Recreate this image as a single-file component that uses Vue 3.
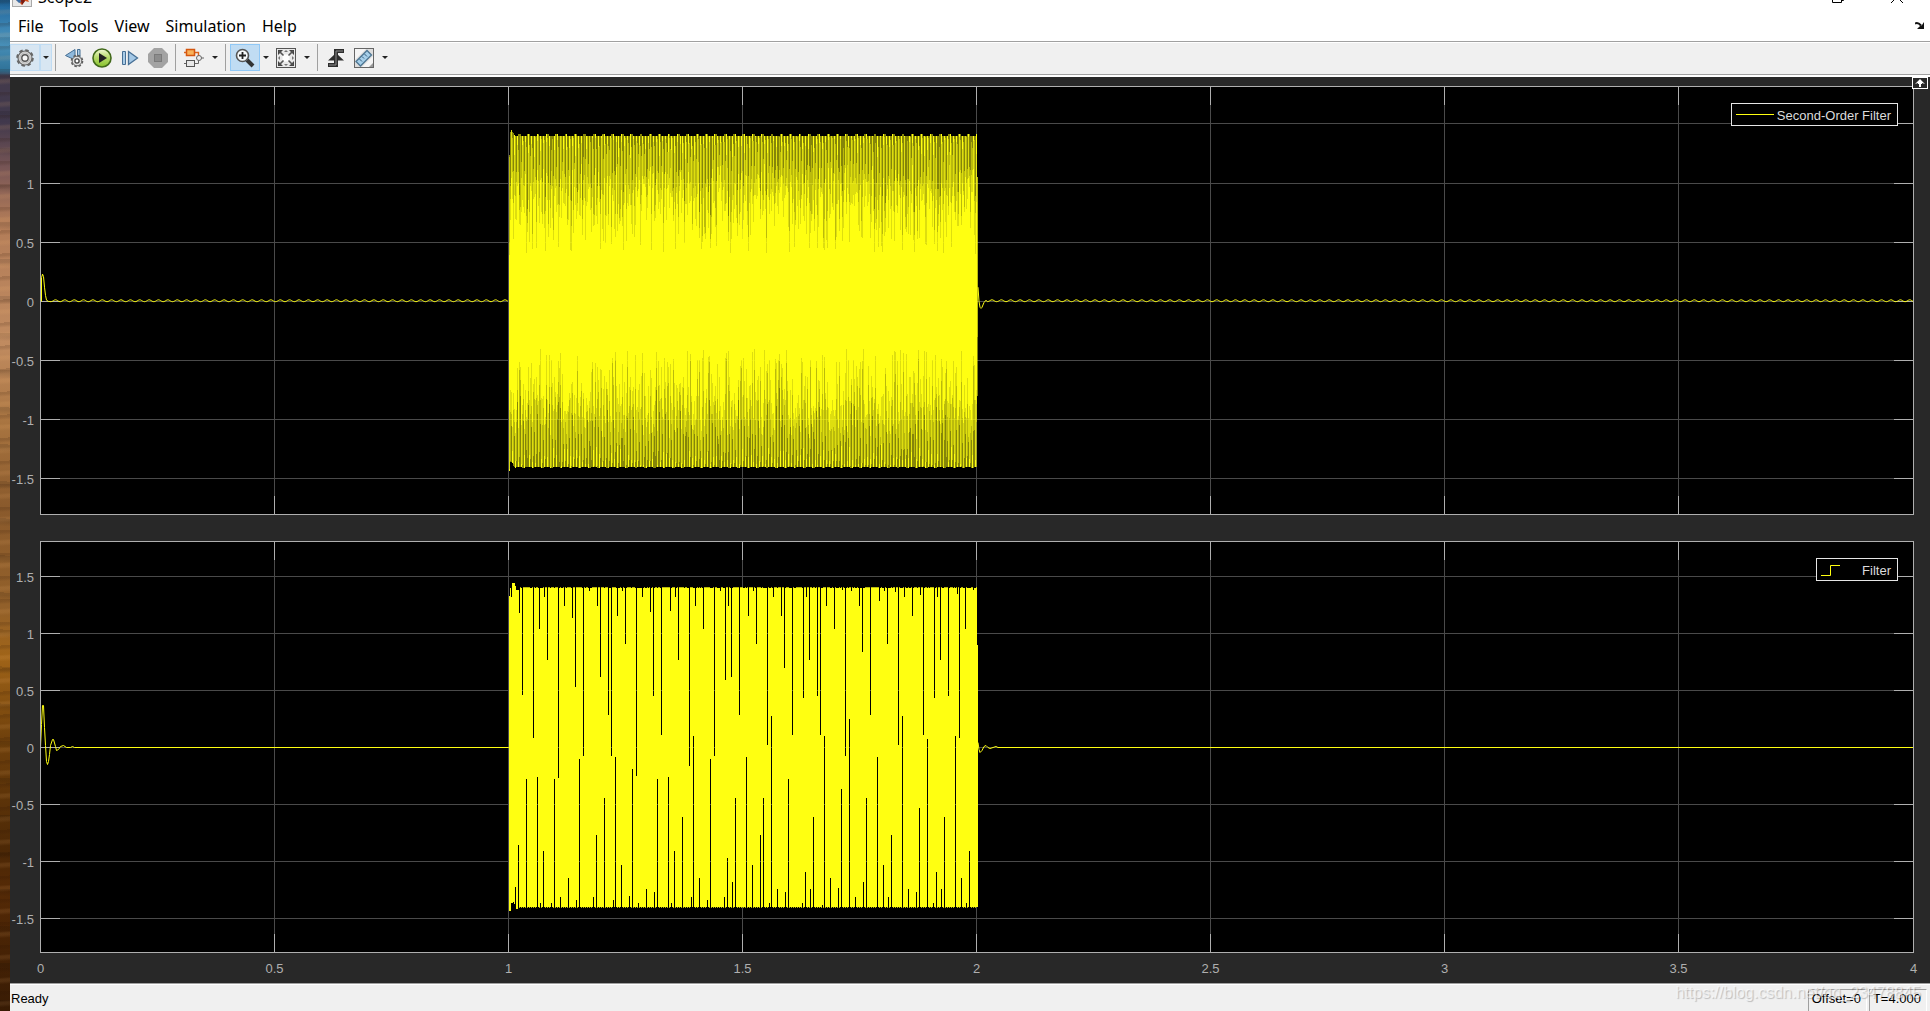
<script setup>
import { ref, reactive, computed, onMounted, onBeforeUnmount } from 'vue'

const menus = ['File', 'Tools', 'View', 'Simulation', 'Help']
const xTicks = [0, 0.5, 1, 1.5, 2, 2.5, 3, 3.5, 4]
const yTicks = [1.5, 1, 0.5, 0, -0.5, -1, -1.5]

const PLOT_LEFT = 30
const PLOT_RIGHT = 17
const TICK = 19

// Raster on which the burst is drawn: columns per second of simulated time
const RATE = 468

const frac = (n) => n - Math.floor(n)
const noise = (i, k) => frac(Math.sin(i * 12.9898 + k * 78.233) * 43758.5453)

// Each shade holds [column, from, to] entries
function sineBurst() {
  const shades = { full: [], light: [], mid: [], dark: [] }
  for (const side of [1, -1]) {
    for (let i = 1; i <= 468; i++) {
      let peak = 1.4 + (frac((i + (side < 0 ? 5 : 0)) / 9.36) < 0.3 ? 0.012 : 0)
      if (side > 0 && i < 7) peak = [1.24, 1.43, 1.45, 1.43, 1.42, 1.41][i - 1]
      if (side < 0 && i < 7) peak = [1.43, 1.36, 1.36, 1.37, 1.39, 1.4][i - 1]
      const phase = frac(i * 0.3437 + side * 0.2)
      const bright = phase < 0.32
      const a = peak - (0.4 + 0.6 * noise(i, side)) * (bright ? 0.6 : 1)
      const b = peak - (peak - a) * (bright ? 0.35 * noise(i, side + 3) : 0.55 + 0.4 * noise(i, side + 3))
      const c = peak - (peak - b) * (phase > 0.62 ? 0.35 + 0.5 * noise(i, side + 6) : 0.2 * noise(i, side + 6))
      shades.full.push([i, 0, a * side])
      shades.light.push([i, a * side, b * side])
      if (bright) {
        shades.full.push([i, b * side, peak * side])
      } else {
        shades.mid.push([i, b * side, c * side])
        shades.dark.push([i, c * side, peak * side])
      }
    }
  }
  shades.dark.push([469, -0.8, -0.3])
  shades.mid.push([469, -0.3, 1.05])
  return shades
}

// Gaps in the sampled signal as [position, level], in fine units:
// 3 positions per column, 341 levels per unit of amplitude around level 562
const upperGaps = [
  [0, [[34, 110], [58, 158], [67, 404], [100, 534], [118, 207], [133, 110], [142, 299], [175, 654], [193, 138], [217, 174],
    [226, 381], [250, 588], [268, 93], [292, 138], [301, 351], [325, 465], [334, 588], [352, 168], [367, 93], [376, 252],
    [409, 648], [427, 110], [451, 156], [460, 408], [484, 525], [511, 153], [526, 110], [535, 299], [568, 618], [586, 138],
    [610, 207], [643, 588], [661, 93], [676, 360], [685, 138], [694, 351], [718, 465], [745, 168], [760, 93], [769, 252]]],
  [750, [[52, 555], [70, 110], [94, 168], [103, 324], [127, 525], [160, 414], [169, 110], [178, 299], [202, 408], [211, 525],
    [229, 138], [253, 207], [277, 90], [286, 588], [304, 93], [328, 138], [337, 276], [361, 465], [388, 123], [403, 93],
    [412, 252], [436, 96], [445, 555], [463, 110], [487, 168], [511, 105], [520, 525], [553, 414], [562, 110], [571, 299],
    [595, 408], [622, 102], [628, 534], [646, 207], [670, 90]]],
]
const lowerGaps = [
  [0, [[46, 981], [55, 855], [79, 657], [112, 651], [121, 1029], [130, 873], [154, 1029], [163, 657], [181, 1011], [205, 954],
    [229, 1020], [238, 597], [280, 1011], [289, 825], [313, 714], [340, 1020], [346, 591], [364, 915], [388, 1008], [397, 627],
    [415, 1029], [439, 987], [463, 996], [472, 657], [505, 651], [514, 1029], [523, 873], [547, 771], [574, 1011], [580, 528],
    [598, 954], [622, 1020], [631, 597], [673, 1011], [682, 894], [697, 966], [706, 714], [739, 591], [757, 915]]],
  [750, [[31, 825], [40, 714], [58, 1029], [64, 468], [82, 987], [106, 996], [115, 657], [157, 1029], [166, 936], [181, 987],
    [190, 771], [217, 1035], [223, 528], [241, 954], [265, 984], [274, 687], [298, 477], [316, 1011], [340, 966], [349, 714],
    [382, 591], [400, 915], [415, 1011], [424, 825], [457, 468], [475, 987], [499, 996], [508, 744], [532, 537], [550, 1029],
    [559, 936], [574, 987], [583, 771], [616, 528], [634, 954], [649, 1029], [658, 873]]],
]

function gapMap(groups) {
  const map = new Map()
  for (const [start, list] of groups) {
    for (const [pos, level] of list) map.set((start + pos - 25) / 3, (562 - level) / 341)
  }
  return map
}

function sampledBurst() {
  const upper = gapMap(upperGaps)
  const lower = gapMap(lowerGaps)
  const full = []
  const mid = []
  const startTop = [1.33, 1.4, 1.33, 1.45, 1.45, 1.45, 1.42, 1.39, 1.39, 1.39]
  const startBottom = [-1.44, -1.44, -1.37, -1.37, -1.36, -1.38, -1.41, -1.42, -1.42, -1.41]
  for (let i = 1; i <= 468; i++) {
    const top = upper.get(i) ?? startTop[i - 1] ?? 1.405
    const bottom = lower.get(i) ?? startBottom[i - 1] ?? -1.405
    full.push([i, bottom, top])
    if (i > 10 && !upper.has(i) && noise(i, 2) > 0.4) mid.push([i, top, top + 0.01])
    if (i > 10 && !lower.has(i) && i % 2) mid.push([i, bottom - 0.01, bottom])
  }
  full.push([469, -1.4, 0.9])
  return { full, light: [], mid, dark: [] }
}

function ripple(from, to) {
  const points = []
  for (let t = from; t <= to; t += 0.002) points.push([t, 0.005 + 0.008 * Math.sin((t - 0.007) * 2 * Math.PI * 50)])
  return points
}
const at = (start, list) => list.map(([dx, v]) => [start + dx / RATE, v])

const charts = reactive([
  {
    name: 'Second-Order Filter',
    marker: 'line',
    top: 9,
    bottom: 12,
    max: 1.8162,
    min: -1.8018,
    width: 1920,
    height: 450,
    showX: false,
    shades: sineBurst(),
    lines: [
      [...at(0, [[1, 0], [1, 0.2], [2, 0.23], [3, 0.21], [4, 0.12], [5, 0.05], [6, 0.01], [8, 0]]), ...ripple(0.02, 1)],
      [...at(2, [[1, 0.12], [2, 0], [3, -0.05], [4, -0.06], [5, -0.05], [7, -0.01], [9, 0.01]]), ...ripple(2.022, 4)],
    ],
  },
  {
    name: 'Filter',
    marker: 'step',
    top: 14,
    bottom: 30,
    max: 1.8123,
    min: -1.8035,
    width: 1920,
    height: 456,
    showX: true,
    shades: sampledBurst(),
    lines: [
      [...at(0, [[0, 0], [1, 0.2], [2, 0.37], [3, 0.37], [4, 0.18], [5, 0.02], [6, -0.12], [7, -0.15], [8, -0.12], [9, -0.06],
        [10, 0.02], [12, 0.07], [13, 0.07], [15, 0.01], [16, -0.03], [18, -0.02], [20, 0.01], [23, 0.015], [26, 0], [30, 0], [32, 0.01], [34, 0]]), [1, 0]],
      [...at(2, [[1, 0.04], [2, -0.02], [3, -0.04], [5, -0.03], [7, 0.01], [9, 0.02], [11, 0], [13, -0.01], [16, 0], [19, 0.01], [21, 0]]), [4, 0]],
    ],
  },
])

const xAt = (c, t) => PLOT_LEFT + 0.5 + (t / 4) * (c.width - PLOT_LEFT - PLOT_RIGHT)
const plotBottom = (c) => c.height - c.bottom - 1
const yAt = (c, v) => c.top + 0.5 + ((c.max - v) / (c.max - c.min)) * (plotBottom(c) - c.top)
const snapX = (c, t) => Math.floor(xAt(c, t) - 0.5) + 0.5
const snapY = (c, v) => Math.round(yAt(c, v) - 0.5) + 0.5
const columnWidth = (c) => (c.width - PLOT_LEFT - PLOT_RIGHT) / 1873

const columns = (c, list) => {
  const start = Math.floor(xAt(c, 1)) + 0.5
  const step = columnWidth(c)
  return list
    .map(([i, from, to]) => `M${start + i * step} ${Math.round(yAt(c, from))}V${Math.round(yAt(c, to))}`)
    .join('')
}
const polyline = (c, points) => {
  const y = c.marker === 'step' ? snapY : yAt
  return points.map(([t, v]) => `${xAt(c, t).toFixed(1)},${y(c, v).toFixed(1)}`).join(' ')
}

const drawn = computed(() =>
  charts.map((c) => ({
    shades: Object.entries(c.shades).map(([shade, list]) => ({ shade, d: columns(c, list) })),
    lines: c.lines.map((points) => polyline(c, points)),
  })),
)

const panels = ref([])
let observer
function measure() {
  panels.value.forEach((el, i) => {
    charts[i].width = el.clientWidth
    charts[i].height = el.clientHeight
  })
}
onMounted(() => {
  measure()
  observer = new ResizeObserver(measure)
  panels.value.forEach((el) => observer.observe(el))
})
onBeforeUnmount(() => observer?.disconnect())
</script>

<template>
  <div class="desktop">
    <div class="wallpaper"></div>
    <main class="window">
      <header class="titlebar">
        <svg class="logo" width="20" height="20" viewBox="0 0 20 20" aria-hidden="true">
          <rect x="0.5" y="0.5" width="19" height="19" fill="#e8e8e8" stroke="#a9a9a9" />
          <path d="M4 13l4-3 4-6 5 11-4-1-3 4-3-3z" fill="#d9541e" />
          <path d="M4 13l4-2 1 4-2 1z" fill="#3b6fa8" />
          <path d="M10 8l3 6-3 4-1-4z" fill="#7a1b12" />
        </svg>
        <span class="title">Scope2</span>
        <svg class="controls" width="72" height="12" viewBox="0 0 72 12" aria-hidden="true">
          <path d="M0.500 0V11.500H9.500V0M9.500 9.500H11.500V0" />
          <path d="M59 12L65 6L71 12" />
        </svg>
      </header>

      <nav class="menubar">
        <button v-for="m in menus" :key="m" type="button">{{ m }}</button>
        <svg class="dock" width="10" height="8" viewBox="0 0 10 8" aria-hidden="true">
          <path d="M0 1.500Q3 0 6 3.500" fill="none" stroke="#111" stroke-width="2" />
          <path d="M9 0V7H2L4.500 4.500L7 3z" fill="#111" />
        </svg>
      </nav>

      <div class="toolbar">
        <button class="wide hover" type="button" aria-label="Configuration properties">
          <svg width="20" height="20" viewBox="0 0 20 20">
            <circle cx="10" cy="10" r="7.500" fill="none" stroke="#666" stroke-width="2.600" stroke-dasharray="3.400 2.490" />
            <circle cx="10" cy="10" r="7" fill="#d6d6d6" stroke="#666" stroke-width="1.200" />
            <circle cx="10" cy="10" r="5" fill="#e4e4e4" stroke="#b8b8b8" />
            <circle cx="10" cy="10" r="3.200" fill="#f6f6f6" stroke="#555" stroke-width="1.400" />
          </svg>
        </button>
        <button class="drop hover" type="button" aria-label="Configuration options"></button>
        <i class="sep"></i>
        <button type="button" aria-label="Step back options">
          <svg width="20" height="20" viewBox="0 0 20 20">
            <path d="M11 1.500V12L1.500 7.500z" fill="#8fb9dc" stroke="#456e93" />
            <path d="M13.500 1.500H16V12H13.500z" fill="#a9cbe6" stroke="#456e93" />
            <circle cx="13" cy="13" r="5.300" fill="none" stroke="#5d5d5d" stroke-width="2" stroke-dasharray="2.400 1.760" />
            <circle cx="13" cy="13" r="4.800" fill="#dedede" stroke="#666" />
            <circle cx="13" cy="13" r="2.100" fill="#fff" stroke="#444" stroke-width="1.300" />
          </svg>
        </button>
        <button type="button" aria-label="Run">
          <svg width="20" height="20" viewBox="0 0 20 20">
            <defs>
              <linearGradient id="runFill" x1="0" y1="0" x2="0" y2="1">
                <stop offset="0" stop-color="#f4fbd9" />
                <stop offset="0.450" stop-color="#b9dc6e" />
                <stop offset="1" stop-color="#86c12c" />
              </linearGradient>
            </defs>
            <circle cx="10" cy="10" r="9" fill="url(#runFill)" stroke="#41691a" stroke-width="1.600" />
            <path d="M7 5L15 10L7 15z" fill="#222" />
          </svg>
        </button>
        <button type="button" aria-label="Step forward">
          <svg width="18" height="18" viewBox="0 0 18 18">
            <path d="M1.500 2.500H4.500V15.500H1.500z" fill="#a9cbe6" stroke="#466f95" />
            <path d="M7.500 2.500L16.500 9L7.500 15.500z" fill="#a4c8e6" stroke="#466f95" stroke-width="1.300" />
          </svg>
        </button>
        <button type="button" aria-label="Stop">
          <svg width="20" height="20" viewBox="0 0 20 20">
            <path d="M6 0H14L20 6V14L14 20H6L0 14V6z" fill="#a3a3a3" />
            <rect x="6.500" y="6.500" width="7" height="7" fill="#8c8c8c" stroke="#7a7a7a" />
          </svg>
        </button>
        <i class="sep"></i>
        <button type="button" aria-label="Highlight block">
          <svg width="20" height="20" viewBox="0 0 20 20">
            <path d="M0 4.500H3M10 4.500H14.500V8" fill="none" stroke="#d9641e" stroke-width="1.400" />
            <path d="M10 15.500H14.500V12M0 15.500H3M17 10H20" fill="none" stroke="#666" />
            <rect x="2.500" y="1.500" width="8" height="6" fill="#f9b25a" stroke="#d4560f" stroke-width="1.500" />
            <rect x="2.500" y="12.500" width="8" height="6" fill="#e8e8e8" stroke="#555" />
            <circle cx="15" cy="10" r="2.500" fill="#eee" stroke="#666" />
          </svg>
        </button>
        <button class="drop spaced" type="button" aria-label="Highlight options"></button>
        <i class="sep"></i>
        <button class="wide pressed" type="button" aria-label="Zoom">
          <svg width="20" height="20" viewBox="0 0 20 20">
            <path d="M12 12L18 18" stroke="#333" stroke-width="4" />
            <circle cx="7.500" cy="7.500" r="6" fill="#f7fafc" stroke="#555" stroke-width="1.600" />
            <path d="M4 7.500H11M7.500 4V11" stroke="#222" stroke-width="1.800" />
          </svg>
        </button>
        <button class="drop" type="button" aria-label="Zoom options"></button>
        <button type="button" aria-label="Scale axes limits">
          <svg width="20" height="20" viewBox="0 0 20 20">
            <rect x="0.500" y="0.500" width="19" height="19" fill="#e9e9e9" stroke="#555" />
            <rect x="6.500" y="6.500" width="7" height="7" fill="#fff" />
            <path d="M2 2H7L2 7zM18 2H13L18 7zM2 18V13L7 18zM18 18V13L13 18z" fill="#444" />
            <path d="M3 3L7.500 7.500M17 3L12.500 7.500M3 17L7.500 12.500M17 17L12.500 12.500" stroke="#555" stroke-width="1.600" />
            <path d="M8 4L10 2L12 4zM8 16L10 18L12 16zM4 8L2 10L4 12zM16 8L18 10L16 12z" fill="#777" />
          </svg>
        </button>
        <button class="drop spaced" type="button" aria-label="Scale options"></button>
        <i class="sep"></i>
        <button type="button" aria-label="Triggers">
          <svg width="18" height="20" viewBox="0 0 18 20">
            <path d="M1 17H9V3H17" fill="none" stroke="#2e2e2e" stroke-width="4" />
            <path d="M1 12.500L9 5L17 12.500z" fill="#2e2e2e" />
            <path d="M2 17H9V3H16" fill="none" stroke="#8a8a8a" />
          </svg>
        </button>
        <button type="button" aria-label="Cursor measurements">
          <svg width="20" height="20" viewBox="0 0 20 20">
            <rect x="0.500" y="0.500" width="19" height="19" fill="#f5f5f5" stroke="#666" />
            <path d="M1 19V12L12 1H19V8L8 19z" fill="#ddd" />
            <path d="M2 13.500L13 2.500L17.500 7L6.500 18z" fill="#a7d0eb" stroke="#4e7693" stroke-width="1.300" />
            <path d="M5.500 11L8 13.500M8 8.500L10 10.500M10.500 6L13 8.500" stroke="#375d7a" />
            <path d="M15 19L19 15V19z" fill="#999" />
          </svg>
        </button>
        <button class="drop spaced" type="button" aria-label="Measurement options"></button>
      </div>

      <div class="scope">
        <section v-for="(c, n) in charts" :key="c.name" ref="panels" class="panel" :class="c.marker">
          <svg class="plot" :viewBox="`0 0 ${c.width} ${c.height}`" role="img" :aria-label="c.name">
            <rect
              :x="PLOT_LEFT + 0.5" :y="c.top + 0.5"
              :width="c.width - PLOT_LEFT - PLOT_RIGHT" :height="plotBottom(c) - c.top"
              fill="#000"
            />
            <g class="grid">
              <path v-for="t in xTicks.slice(1, -1)" :key="t" :d="`M${snapX(c, t)} ${c.top}V${plotBottom(c)}`" />
              <path v-for="v in yTicks" :key="v" :d="`M${PLOT_LEFT} ${snapY(c, v)}H${c.width - PLOT_RIGHT}`" />
            </g>
            <g class="axis">
              <path
                v-for="t in xTicks.slice(1, -1)" :key="t"
                :d="`M${snapX(c, t)} ${c.top}v${TICK}M${snapX(c, t)} ${plotBottom(c)}v-${TICK - 1}`"
              />
              <path
                v-for="v in yTicks" :key="v"
                :d="`M${PLOT_LEFT} ${snapY(c, v)}h${TICK + 1}M${c.width - PLOT_RIGHT} ${snapY(c, v)}h-${TICK}`"
              />
            </g>
            <path
              v-for="s in drawn[n].shades" :key="s.shade" :class="['shade', s.shade]" :d="s.d"
              :stroke-width="columnWidth(c)"
            />
            <polyline v-for="(p, k) in drawn[n].lines" :key="k" class="trace" :points="p" />
            <rect
              class="frame" :x="PLOT_LEFT + 0.5" :y="c.top + 0.5"
              :width="c.width - PLOT_LEFT - PLOT_RIGHT" :height="plotBottom(c) - c.top"
            />
            <text v-for="v in yTicks" :key="v" class="tick end" :x="PLOT_LEFT - 6" :y="snapY(c, v) + 5">{{ v }}</text>
            <template v-if="c.showX">
              <text v-for="t in xTicks" :key="t" class="tick middle" :x="snapX(c, t)" :y="plotBottom(c) + 21">{{ t }}</text>
            </template>
          </svg>
          <div class="legend">
            <svg v-if="c.marker === 'line'" width="38" height="12" viewBox="0 0 38 12" aria-hidden="true">
              <path class="trace" d="M0 5.500H38" />
            </svg>
            <svg v-else width="38" height="12" viewBox="0 0 38 12" aria-hidden="true">
              <path class="trace" d="M0 11.500H9.500V1.500H19" />
            </svg>
            <span>{{ c.name }}</span>
          </div>
        </section>
        <button class="maximize" type="button" aria-label="Maximize axes">
          <svg width="10" height="8" viewBox="0 0 10 8"><path d="M0 5L5 0L10 5L7 4V5H6V8H4V5H3V4z" fill="#fff" /></svg>
        </button>
      </div>

      <footer class="status">
        <span class="ready">Ready</span>
        <span class="cell">Offset=0</span>
        <span class="cell">T=4.000</span>
        <span class="watermark">https://blog.csdn.net/qq_23478845</span>
      </footer>
    </main>
  </div>
</template>

<style>
body {
  margin: 0;
}
</style>

<style scoped>
.desktop {
  display: flex;
  min-height: 100vh;
  overflow: hidden;
  font-family: "Liberation Sans", Arial, sans-serif;
  font-size: 13px;
}
.wallpaper {
  flex: 0 0 10px;
  background:
    repeating-linear-gradient(176deg, rgba(40, 15, 0, 0.14) 0 2px, transparent 5px 9px, rgba(255, 190, 120, 0.1) 11px 13px, transparent 16px 23px),
    repeating-linear-gradient(183deg, rgba(0, 0, 0, 0.1) 0 3px, transparent 8px 37px),
    linear-gradient(#1d649c 0, #4b93bc 4%, #2f7298 7%, #443b4c 7.5%, #40384c 12%, #7c5856 17%, #b27c58 22%, #c08b60 34%, #a87440 42%, #8a5a2c 50%, #92602a 60%, #a06418 65%, #70410c 73%, #4c2806 84%, #552a06 88%, #381b04 100%);
}
.window {
  flex: 1;
  min-width: 0;
  display: flex;
  flex-direction: column;
  background: #fff;
}
button {
  margin: 0;
  padding: 0;
  border: 0;
  background: none;
  font: inherit;
  color: inherit;
}

.titlebar {
  height: 10px;
  overflow: hidden;
  display: flex;
  align-items: flex-start;
  gap: 6px;
  padding: 0 26px 0 2px;
  font-family: "Noto Sans", sans-serif;
  font-size: 16px;
  line-height: 22px;
}
.logo {
  margin-top: -13px;
}
.title {
  margin-top: -14px;
}
.controls {
  margin: -9px 0 0 auto;
  fill: none;
  stroke: #000;
}

.menubar {
  display: flex;
  align-items: center;
  gap: 16px;
  height: 30px;
  padding: 1px 5px 0 8px;
  border-bottom: 1px solid #a0a0a0;
  font-family: "Noto Sans", sans-serif;
  font-size: 16px;
  line-height: 24px;
}
.dock {
  margin-left: auto;
}

.toolbar {
  display: flex;
  align-items: flex-start;
  height: 30px;
  padding-top: 1px;
  background: #f0f0f0;
  border-top: 1px solid #fff;
  border-bottom: 1px solid #a0a0a0;
}
.toolbar button {
  flex: none;
  display: flex;
  align-items: center;
  justify-content: center;
  box-sizing: border-box;
  width: 28px;
  height: 27px;
}
.toolbar .wide {
  width: 30px;
}
.toolbar .hover {
  background: #d8e6f2;
  border: 1px solid #c0dcf3;
}
.toolbar .pressed {
  background: #c0dcf3;
  border: 1px solid #90c8f6;
}
.toolbar .drop {
  width: 12px;
}
.toolbar .spaced {
  margin: 0 1px;
}
.drop::before {
  content: "";
  border: 3px solid transparent;
  border-top-color: #222;
  border-bottom: 0;
}
.sep {
  width: 1px;
  height: 27px;
  margin: 0 4px 0 3px;
  background: #a0a0a0;
}

.scope {
  position: relative;
  flex: 1;
  display: flex;
  flex-direction: column;
  background: #282828;
  border-top: 2px solid #fff;
}
.panel {
  position: relative;
  flex: 450 1 0;
  min-height: 200px;
}
.panel.step {
  flex-grow: 456;
}
.plot {
  position: absolute;
  inset: 0;
  width: 100%;
  height: 100%;
}
.grid {
  stroke: #4a4a4a;
}
.axis,
.frame {
  stroke: #afafaf;
  fill: none;
}
.shade {
  fill: none;
  stroke: #ffff11;
}
.shade.light {
  stroke-opacity: 0.87;
}
.shade.mid {
  stroke-opacity: 0.73;
}
.shade.dark {
  stroke-opacity: 0.52;
}
.trace {
  fill: none;
  stroke: #ffff11;
  stroke-width: 1px;
}
.tick {
  fill: #afafaf;
  font-size: 13px;
}
.end {
  text-anchor: end;
}
.middle {
  text-anchor: middle;
}
.legend {
  position: absolute;
  top: 26px;
  right: 32px;
  display: flex;
  align-items: center;
  gap: 3px;
  box-sizing: border-box;
  height: 23px;
  padding: 0 6px 0 4px;
  background: #000;
  border: 1px solid #e6e6e6;
  color: #dcdcdc;
  line-height: 20px;
}
.legend span {
  padding-top: 3px;
}
.step .legend {
  top: 31px;
}
.maximize {
  position: absolute;
  top: 0;
  right: 2px;
  display: flex;
  align-items: center;
  justify-content: center;
  box-sizing: border-box;
  width: 16px;
  height: 12px;
  background: #282828;
  border: 1px solid #fff;
}

.status {
  position: relative;
  display: flex;
  align-items: flex-end;
  gap: 2px;
  box-sizing: border-box;
  height: 28px;
  padding: 0 3px 0 1px;
  background: #f0f0f0;
  border-top: 1px solid #a0a0a0;
  box-shadow: inset 0 1px #fff;
  line-height: 18px;
}
.ready {
  flex: 1;
  padding-bottom: 3px;
}
.cell {
  box-sizing: border-box;
  height: 22px;
  padding: 0 5px 0 3px;
  border: 1px solid #a0a0a0;
  border-right-color: #fff;
  border-bottom: 0;
}
.watermark {
  position: absolute;
  right: 9px;
  bottom: 9px;
  color: rgba(255, 255, 255, 0.6);
  text-shadow: 1px 1px 1px rgba(0, 0, 0, 0.22);
  font-size: 16px;
}
</style>
